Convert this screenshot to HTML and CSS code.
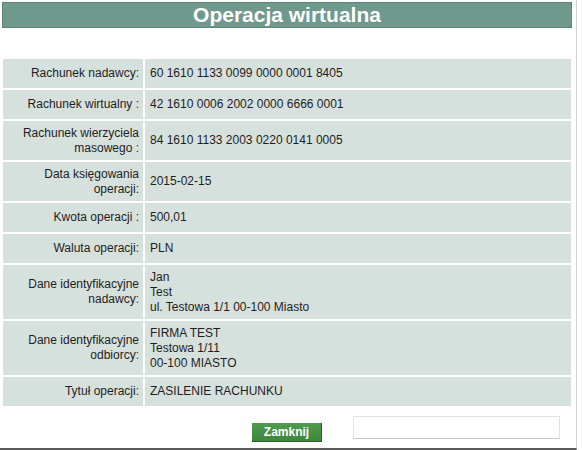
FILE: index.html
```html
<!DOCTYPE html>
<html lang="pl">
<head>
<meta charset="utf-8">
<title>Operacja wirtualna</title>
<link rel="stylesheet" href="styles.css">
</head>
<body>
<div class="frame">
  <h1 class="title">Operacja wirtualna</h1>
  <div class="details">
    <div class="label">Rachunek nadawcy:</div>
    <div class="value">60 1610 1133 0099 0000 0001 8405</div>

    <div class="label">Rachunek wirtualny :</div>
    <div class="value">42 1610 0006 2002 0000 6666 0001</div>

    <div class="label">Rachunek wierzyciela<br>masowego :</div>
    <div class="value">84 1610 1133 2003 0220 0141 0005</div>

    <div class="label">Data księgowania<br>operacji:</div>
    <div class="value">2015-02-15</div>

    <div class="label">Kwota operacji :</div>
    <div class="value">500,01</div>

    <div class="label">Waluta operacji:</div>
    <div class="value">PLN</div>

    <div class="label">Dane identyfikacyjne<br>nadawcy:</div>
    <div class="value">Jan<br>Test<br>ul. Testowa 1/1 00-100 Miasto</div>

    <div class="label">Dane identyfikacyjne<br>odbiorcy:</div>
    <div class="value">FIRMA TEST<br>Testowa 1/11<br>00-100 MIASTO</div>

    <div class="label">Tytuł operacji:</div>
    <div class="value">ZASILENIE RACHUNKU</div>
  </div>
  <div class="footer">
    <button class="btn" type="button">Zamknij</button>
    <div class="blank"></div>
  </div>
</div>
</body>
</html>
```

FILE: styles.css
```css
html, body {
  margin: 0;
  padding: 0;
  background: #ffffff;
}

body {
  font-family: "Liberation Sans", Arial, sans-serif;
  font-size: 12px;
  color: #1e1e1e;
}

.frame {
  box-sizing: border-box;
  width: 577px;
  height: 450px;
  border-right: 1px solid #d4d4d4;
  border-bottom: 2px solid #5a5a5a;
  padding-top: 2px;
}

.title {
  box-sizing: border-box;
  margin: 0 0 0 2px;
  width: 570px;
  height: 26px;
  background: #6f998c;
  border: 1px solid #5f8579;
  color: #ffffff;
  font-size: 21px;
  font-weight: bold;
  line-height: 24px;
  text-align: center;
}

.details {
  margin: 31px 0 0 3px;
  width: 568px;
  display: grid;
  grid-template-columns: 140px 1fr;
  column-gap: 2px;
  row-gap: 2px;
  background: #ffffff;
}

.label,
.value {
  background: #d6e0dd;
  min-height: 20px;
  padding: 4.5px 5px;
  line-height: 15px;
  display: flex;
  align-items: center;
}

.label {
  justify-content: flex-end;
  text-align: right;
  padding-right: 4px;
}

.value {
  padding-left: 5px;
}

.footer {
  display: flex;
  align-items: flex-start;
  padding-left: 252px;
  margin-top: 10px;
  gap: 31px;
}

.btn {
  box-sizing: border-box;
  margin-top: 7px;
  width: 70px;
  height: 19px;
  padding: 0;
  border: none;
  border-right: 1px solid #2c5e2c;
  border-bottom: 1px solid #2c5e2c;
  background: linear-gradient(#4f9b4f, #3d863d);
  color: #ffffff;
  font-family: "Liberation Sans", Arial, sans-serif;
  font-size: 12px;
  font-weight: bold;
  line-height: 17px;
}

.blank {
  box-sizing: border-box;
  width: 207px;
  height: 23px;
  background: #ffffff;
  border: 1px solid #e2e2e2;
  border-bottom: 1px solid #c8c8c8;
}
```
